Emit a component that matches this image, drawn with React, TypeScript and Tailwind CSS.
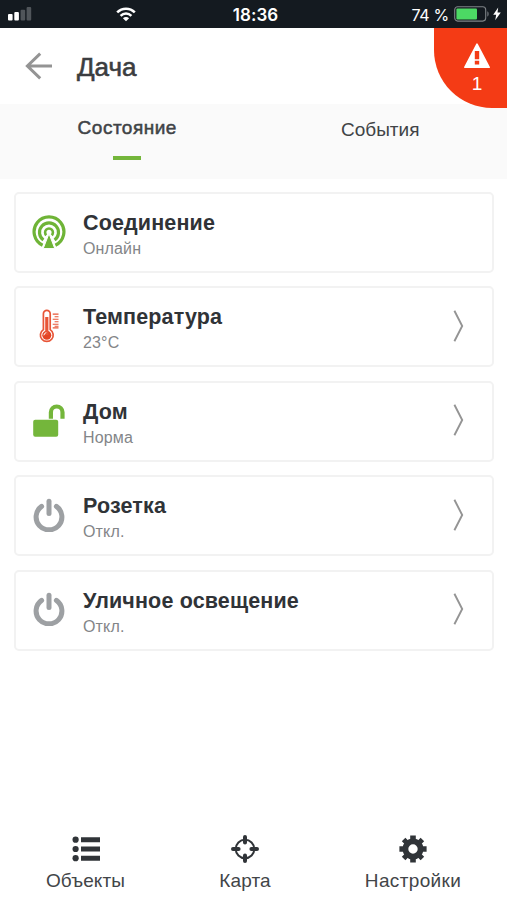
import type { ReactNode } from "react";

function SignalIcon() {
  return (
    <svg width="24" height="14" viewBox="0 0 24 14">
      <rect x="0" y="7" width="4.6" height="6.5" rx="1" fill="#fff" />
      <rect x="6.3" y="5" width="4.6" height="8.5" rx="1" fill="#fff" />
      <rect x="12.6" y="2.7" width="4.6" height="10.8" rx="1" fill="#50555a" />
      <rect x="18.6" y="0" width="4.6" height="13.5" rx="1" fill="#50555a" />
    </svg>
  );
}

function WifiIcon() {
  return (
    <svg width="20" height="15" viewBox="0 0 20 15" fill="none" stroke="#fff" strokeWidth="2.5">
      <path d="M1.2 5.4C6 .4 14 .4 18.8 5.4" />
      <path d="M4.6 8.8c3-3 7.8-3 10.8 0" />
      <path d="M10 14.3 6.9 11.2c1.7-1.7 4.5-1.7 6.2 0Z" fill="#fff" stroke="none" />
    </svg>
  );
}

function BatteryIcon() {
  return (
    <svg width="36" height="16" viewBox="0 0 36 16">
      <rect x="0.7" y="0.7" width="31" height="14.4" rx="3" fill="none" stroke="#7e8387" strokeWidth="1.1" />
      <rect x="2.4" y="2.4" width="20.6" height="11" rx="1" fill="#4cd964" />
      <path d="M33.4 5.2c1.6.8 1.6 4.6 0 5.4Z" fill="#7e8387" />
    </svg>
  );
}

function BoltIcon() {
  return (
    <svg width="8" height="14" viewBox="0 0 8 14">
      <path d="M5.2.6.2 7.8h3L2.2 13.2 7.8 5.4H4.5Z" fill="#fff" />
    </svg>
  );
}

function BackIcon() {
  return (
    <svg width="28" height="28" viewBox="0 0 28 28" fill="none" stroke="#949494" strokeWidth="3">
      <path d="M27 14H3M15.2 1.6 2.4 14l12.8 12.4" />
    </svg>
  );
}

function AlertIcon() {
  return (
    <svg width="28" height="26" viewBox="0 0 28 26">
      <path d="M14 1.2 26.2 24.3H1.8Z" fill="#fff" stroke="#fff" strokeWidth="1.6" strokeLinejoin="round" />
      <path d="M11.8 8h4.4v8.2h-4.4ZM11.8 17.7h4.4v3.7h-4.4Z" fill="#f43b15" />
    </svg>
  );
}

function ConnectionIcon() {
  return (
    <svg width="34" height="34" viewBox="0 0 34 34" fill="none" stroke="#6fb437">
      <path d="M10.6 30.3a14.9 14.9 0 1 1 12.8 0" strokeWidth="3.2" />
      <path d="M11.4 25a9.5 9.5 0 1 1 11.2 0" strokeWidth="3.2" />
      <path d="M14.3 20.2a3.9 3.9 0 1 1 5.4 0" strokeWidth="2.6" />
      <path d="M17 18.6 22.8 33.6H11.2Z" fill="#6fb437" stroke="#fff" strokeWidth="1" />
    </svg>
  );
}

function ThermometerIcon() {
  return (
    <svg width="34" height="34" viewBox="0 0 34 34" fill="none" stroke="#e85537">
      <path d="M11.4 20.6V4.8a3.4 3.4 0 0 1 6.8 0v15.8a6.4 6.4 0 1 1-6.8 0Z" strokeWidth="1.7" />
      <circle cx="14.8" cy="26.2" r="4.5" fill="#e34525" stroke="none" />
      <path d="M14.8 8v18" strokeWidth="3.2" />
      <path d="M11.9 26.3a3 3 0 0 1 2.4-2.7" stroke="#fff" strokeWidth="1" />
      <path
        d="M20.7 5.1h5.8M22.6 7.8h3.9M20.7 10.2h5.8M22.6 12.8h3.9M20.7 15.2h5.8M22.6 17.2h3.9M20.7 18.9h5.8"
        strokeWidth="1.1"
      />
    </svg>
  );
}

function UnlockIcon() {
  return (
    <svg width="34" height="34" viewBox="0 0 34 34">
      <rect x="1.2" y="16.8" width="25" height="17" rx="2" fill="#74b63b" />
      <path d="M18.9 15.8V9.3a5.8 5.8 0 0 1 11.6 0v6.5" fill="none" stroke="#74b63b" strokeWidth="4.2" />
    </svg>
  );
}

function PowerIcon() {
  return (
    <svg width="34" height="34" viewBox="0 0 34 34" fill="none" stroke="#9da0a3" strokeLinecap="round">
      <path d="M9.6 8.4a12.9 12.9 0 1 0 14.8 0" strokeWidth="5" />
      <path d="M17 3.2v12.4" strokeWidth="5" />
    </svg>
  );
}

function ChevronIcon() {
  return (
    <svg width="11" height="32" viewBox="0 0 11 32" fill="none" stroke="#949494" strokeWidth="1.9">
      <path d="M1.4.8 9.2 16 1.4 31.2" />
    </svg>
  );
}

function ListIcon() {
  return (
    <svg width="28" height="28" viewBox="0 0 28 28" fill="#303438">
      <circle cx="3.6" cy="4.7" r="3.1" />
      <circle cx="3.6" cy="14" r="3.1" />
      <circle cx="3.6" cy="23.2" r="3.1" />
      <path d="M9 2.2h19v5H9ZM9 11.5h19v5H9ZM9 20.7h19v5H9Z" />
    </svg>
  );
}

function TargetIcon() {
  return (
    <svg width="28" height="28" viewBox="0 0 28 28" fill="none" stroke="#303438">
      <circle cx="14" cy="14" r="9.3" strokeWidth="2" />
      <path d="M14 2v5.6M14 20.4V26M2 14h5.6M20.4 14H26" strokeWidth="4" strokeLinecap="round" />
    </svg>
  );
}

function GearIcon() {
  return (
    <svg width="28" height="28" viewBox="0 0 28 28" fill="none" stroke="#303438">
      <circle cx="14" cy="14" r="7.6" strokeWidth="5.8" />
      <path d="M14 .4v4.4M14 23.2v4.4M.4 14h4.4M23.2 14h4.4" strokeWidth="5.6" />
      <path d="m4.6 4.6 3 3M20.4 20.4l3 3M4.6 23.4l3-3M20.4 7.6l3-3" strokeWidth="5" />
    </svg>
  );
}

interface DeviceProps {
  icon: ReactNode;
  title: string;
  status: string;
  link?: boolean;
}

const devices: DeviceProps[] = [
  { icon: <ConnectionIcon />, title: "Соединение", status: "Онлайн" },
  { icon: <ThermometerIcon />, title: "Температура", status: "23°C", link: true },
  { icon: <UnlockIcon />, title: "Дом", status: "Норма", link: true },
  { icon: <PowerIcon />, title: "Розетка", status: "Откл.", link: true },
  { icon: <PowerIcon />, title: "Уличное освещение", status: "Откл.", link: true },
];

function DeviceCard({ icon, title, status, link }: DeviceProps) {
  return (
    <div className="flex h-[81px] items-center rounded-[5px] border-2 border-[#f2f2f2] bg-white pb-[2px] pl-4 pr-7">
      <div className="w-[51px]">{icon}</div>
      <div className="flex-1 pt-[9px]">
        <p className="text-[21.5px] font-bold leading-[26px] tracking-[0.15px] text-[#303337]">{title}</p>
        <p className="text-[16px] leading-[26px] tracking-[0.15px] text-[#838588]">{status}</p>
      </div>
      {link && <ChevronIcon />}
    </div>
  );
}

export default function App() {
  return (
    <div className="flex h-[900px] w-[507px] flex-col overflow-hidden bg-white font-['Liberation_Sans',sans-serif]">
      <div className="grid h-[28px] grid-cols-3 items-center bg-[#141a20] font-['Inter',sans-serif] text-white">
        <div className="flex items-center pl-2">
          <SignalIcon />
          <div className="ml-[84px]">
            <WifiIcon />
          </div>
        </div>
        <p className="pl-1 pt-[2px] text-center text-[17px] font-semibold leading-[26px] tracking-[0.1px]">18:36</p>
        <div className="flex items-center justify-end pr-[6px]">
          <p className="mr-[5px] whitespace-nowrap pt-[2px] text-[16px] leading-[26px] tracking-[-0.3px]">74 %</p>
          <BatteryIcon />
          <div className="ml-[3px]">
            <BoltIcon />
          </div>
        </div>
      </div>

      <header className="relative z-10 flex h-[76px] items-center pl-[25px]">
        <BackIcon />
        <h1 className="ml-6 pt-px text-[26px] leading-8 text-[#3b3d40] [-webkit-text-stroke:0.6px]">Дача</h1>
        <div className="absolute right-0 top-0 flex h-[80px] w-[73px] flex-col items-center rounded-bl-[58px] bg-[#f43b15] pl-[13px] pt-[15px] text-white">
          <AlertIcon />
          <p className="mt-[5px] text-[19px] leading-5">1</p>
        </div>
      </header>

      <nav className="grid h-[75px] grid-cols-2 bg-[#fafafa] text-center text-[19px] leading-6 text-[#404346]">
        <div className="pl-px pt-3">
          <p className="tracking-[0.5px] [-webkit-text-stroke:0.5px]">Состояние</p>
          <div className="mx-auto mt-[16px] h-1 w-[28px] bg-[#74b63b]" />
        </div>
        <p className="pt-[14px]">События</p>
      </nav>

      <main className="flex flex-1 flex-col gap-[13.4px] pl-[14px] pr-[13px] pt-[13px]">
        {devices.map((device) => (
          <DeviceCard key={device.title} {...device} />
        ))}
      </main>

      <footer className="flex h-[65px] text-[19px] leading-6 tracking-[0.1px] text-[#424548]">
        <div className="flex w-[171px] flex-col items-center gap-[6px]">
          <ListIcon />
          <p>Объекты</p>
        </div>
        <div className="flex w-[148px] flex-col items-center gap-[6px]">
          <TargetIcon />
          <p>Карта</p>
        </div>
        <div className="flex flex-1 flex-col items-center gap-[6px]">
          <GearIcon />
          <p className="tracking-[0.35px]">Настройки</p>
        </div>
      </footer>
    </div>
  );
}
